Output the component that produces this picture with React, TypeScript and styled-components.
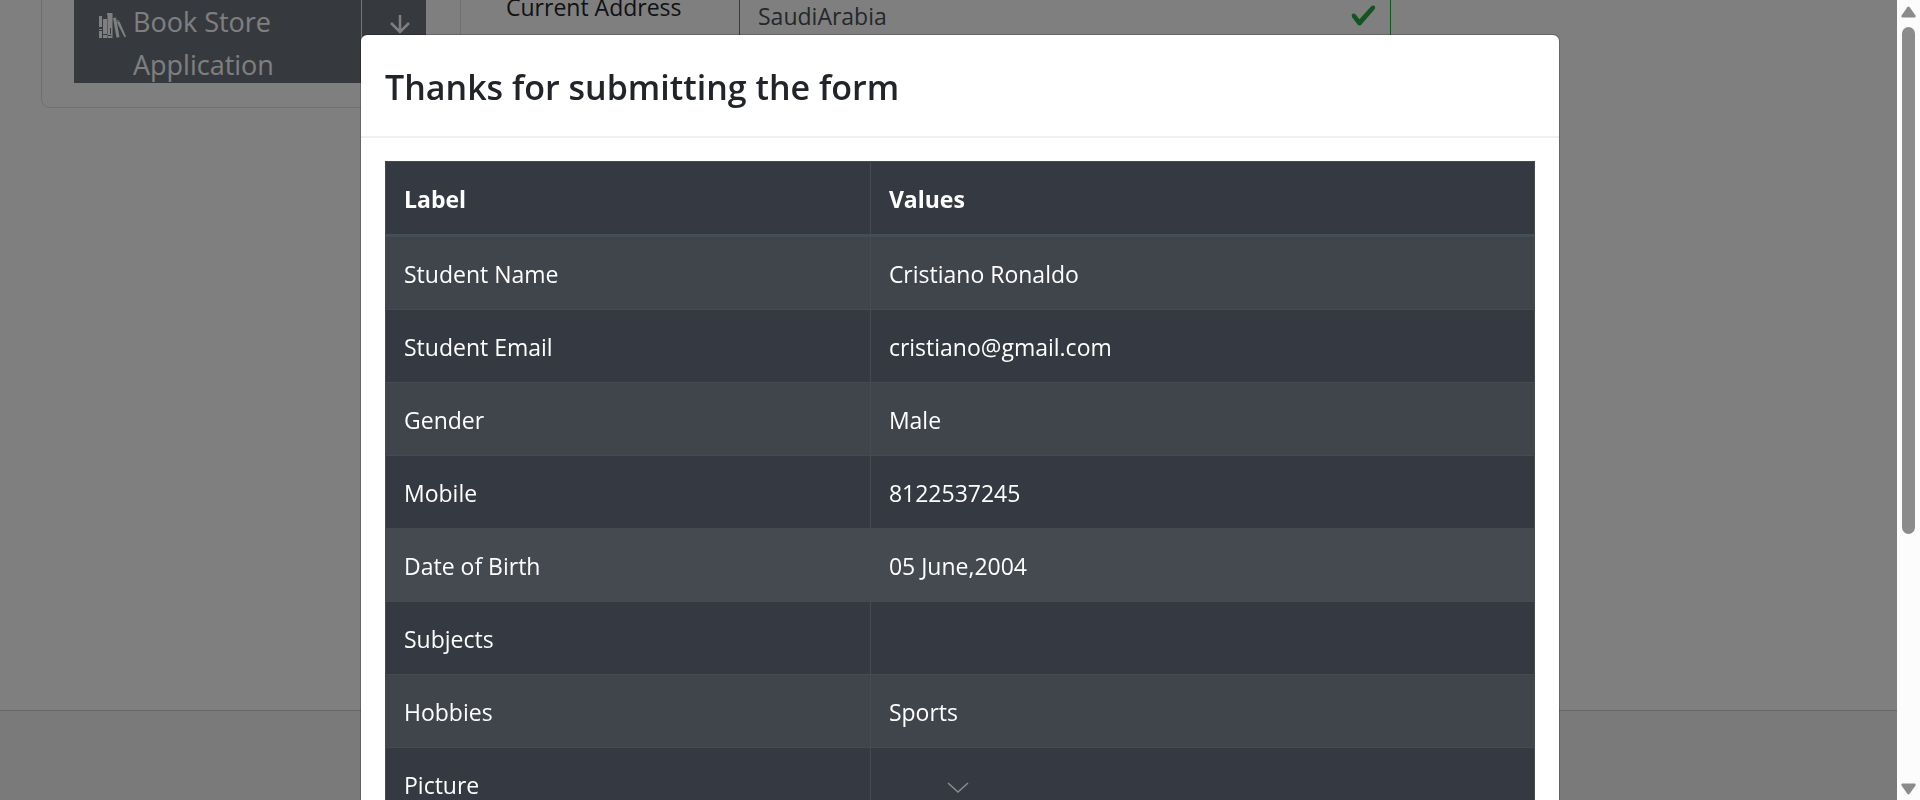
import React from "react";
import styled, { createGlobalStyle } from "styled-components";

const GlobalStyle = createGlobalStyle`
  *, *::before, *::after { box-sizing: border-box; }
  body {
    margin: 0;
    overflow: hidden;
    background: #ffffff;
    color: #212529;
    font-family: "Segoe UI", "Open Sans", "Noto Sans", sans-serif;
    font-size: 23px;
    line-height: 36px;
  }
`;

const Page = styled.div`
  height: 100vh;
  overflow: hidden;
  display: flex;
  flex-direction: column;
  padding-right: 23px;
`;

const Content = styled.main`
  flex: 1;
  min-height: 0;
  display: flex;
  align-items: flex-start;
  margin-top: -60px;
  padding: 0 41px;
`;

const Sidebar = styled.nav`
  flex: 0 0 420px;
  padding: 0 34px 24px 32px;
  border: 1px solid #dfdfdf;
  border-top: 0;
  border-radius: 0 0 9px 9px;
`;

const GroupHeader = styled.button`
  display: flex;
  align-items: stretch;
  width: 100%;
  height: 143px;
  padding: 0;
  border: 0;
  background: #6c757d;
  color: #ffffff;
  font: inherit;
  font-size: 27px;
  line-height: 43px;
  text-align: left;
`;

const GroupTitle = styled.span`
  flex: 1;
  display: flex;
  align-items: flex-start;
  gap: 7px;
  padding: 60px 60px 0 25px;

  svg { flex: none; margin-top: 13px; }
`;

const GroupToggle = styled.span`
  flex: 0 0 65px;
  display: flex;
  justify-content: center;
  padding: 75px 0 0 11px;
  border-left: 1px solid #e9ecef;
`;

const FormCard = styled.form`
  flex: 1;
  display: flex;
  align-items: flex-start;
  max-width: 1000px;
  padding: 49px 70px 0 45px;
`;

const FieldLabel = styled.label`
  flex: 0 0 233px;
  color: #212529;
`;

const FieldBox = styled.div`
  position: relative;
  flex: 1;
  display: flex;
`;

const AddressInput = styled.textarea`
  flex: 1;
  height: 180px;
  padding: 8px 54px 9px 18px;
  border: 1px solid #28a745;
  border-radius: 6px;
  background: #ffffff;
  color: #495057;
  font: inherit;
  resize: none;
`;

const ValidMark = styled.svg`
  position: absolute;
  top: 13px;
  right: 14px;
`;

const Footer = styled.footer`
  flex: 0 0 90px;
  border-top: 1px solid #d0d0d0;
  background: #f4f4f4;
`;

const Backdrop = styled.div`
  position: fixed;
  inset: 0;
  overflow: hidden;
  padding: 34px 24px 0;
  background: rgba(0, 0, 0, 0.5);
`;

const Dialog = styled.section`
  max-width: 1200px;
  margin: 0 auto;
  border: 1px solid rgba(0, 0, 0, 0.2);
  border-radius: 7px;
  background: #ffffff;
  background-clip: padding-box;
`;

const DialogHeader = styled.header`
  padding: 26px 24px 22px;
  border-bottom: 2px solid #efefef;
`;

const DialogTitle = styled.h1`
  margin: 0;
  font-size: 34px;
  font-weight: 600;
  line-height: 53px;
`;

const DialogBody = styled.div`
  padding: 23px 24px 24px;
`;

const DataTable = styled.table`
  width: 100%;
  table-layout: fixed;
  border-collapse: collapse;
  background: #353941;
  color: #ffffff;

  th, td {
    padding: 19px 18px 17px;
    border: 1px solid #464b53;
    text-align: left;
    font-weight: 400;
  }

  thead th {
    border-bottom: 3px solid #454d55;
    font-weight: 700;
  }
`;

const LabelColumn = styled.col`
  width: 42.2%;
`;

const DataRow = styled.tr<{ $striped: boolean; $active?: boolean }>`
  height: 73px;
  background: ${(p) => (p.$active ? "#454950" : p.$striped ? "#40444b" : "#353941")};
`;

const ScrollHint = styled.svg`
  position: fixed;
  bottom: 6px;
  left: calc(50% - 13px);
`;

const ScrollTrack = styled.div`
  position: fixed;
  top: 0;
  right: 0;
  bottom: 0;
  width: 23px;
  display: flex;
  flex-direction: column;
  align-items: center;
  padding: 6px 0 5px;
  background: #fcfcfc;
`;

const ScrollArea = styled.div`
  flex: 1;
  padding-top: 9px;
`;

const ScrollThumb = styled.div`
  width: 13px;
  height: 67%;
  border-radius: 7px;
  background: #8b8b8b;
`;

const rows = [
  { label: "Student Name", value: "Cristiano Ronaldo" },
  { label: "Student Email", value: "cristiano@gmail.com" },
  { label: "Gender", value: "Male" },
  { label: "Mobile", value: "8122537245" },
  { label: "Date of Birth", value: "05 June,2004", active: true },
  { label: "Subjects", value: "" },
  { label: "Hobbies", value: "Sports" },
  { label: "Picture", value: "" },
];

const BooksIcon = () => (
  <svg width="27" height="25" viewBox="0 0 27 25" fill="#ffffff" aria-hidden="true">
    <path d="M0 3h3v11H0zM0 16h3v1H0zM0 18h3v7H0z" />
    <path d="M4 6h4v15H4zM4 22h4v3H4z" />
    <path fillRule="evenodd" d="M8 0h5.500v25H8.500V2H8zM11 15v6h1v-6zM9 22v1h3.500v-1z" />
    <path d="M14 5l3-.5L20.500 24l-3 .8z" />
    <path d="M18 9.500l2.500-1L27 23.500l-1.500.8zM17.700 8l2-1 .4 1-2 .9z" />
  </svg>
);

const ArrowDownIcon = () => (
  <svg width="20" height="20" viewBox="0 0 20 20" fill="none" stroke="#ffffff" strokeWidth="2.5" aria-hidden="true">
    <path d="M10 0v17M1 8l9 9 9-9" />
  </svg>
);

const Scrollbar = () => (
  <ScrollTrack aria-hidden="true">
    <svg width="15" height="12" viewBox="0 0 15 12" fill="#8b8b8b">
      <path d="M6.300 1.200Q7.500-.3 8.700 1.200L14.500 9.500Q15 11.500 13.500 11.500H1.500Q0 11.500.5 9.500z" />
    </svg>
    <ScrollArea>
      <ScrollThumb />
    </ScrollArea>
    <svg width="15" height="12" viewBox="0 0 15 12" fill="#8b8b8b">
      <path d="M6.300 10.800Q7.500 12.300 8.700 10.800L14.500 2.500Q15 .5 13.500.5H1.500Q0 .5.5 2.500z" />
    </svg>
  </ScrollTrack>
);

export default function App() {
  return (
    <>
      <GlobalStyle />
      <Page>
        <Content>
          <Sidebar>
            <GroupHeader type="button">
              <GroupTitle>
                <BooksIcon />
                <span>Book Store Application</span>
              </GroupTitle>
              <GroupToggle>
                <ArrowDownIcon />
              </GroupToggle>
            </GroupHeader>
          </Sidebar>
          <FormCard>
            <FieldLabel htmlFor="currentAddress">Current Address</FieldLabel>
            <FieldBox>
              <AddressInput id="currentAddress" defaultValue="SaudiArabia" />
              <ValidMark width="27" height="27" viewBox="0 0 8 8" fill="#28a745" aria-hidden="true">
                <path d="M2.300 6.730L.6 4.530c-.4-1.040.46-1.400 1.100-.8l1.100 1.400 3.400-3.800c.6-.63 1.600-.27 1.200.7l-4 4.600c-.43.5-.8.4-1.100.1z" />
              </ValidMark>
            </FieldBox>
          </FormCard>
        </Content>
        <Footer />
      </Page>
      <Backdrop>
        <Dialog role="dialog" aria-modal="true" aria-labelledby="dialog-title">
          <DialogHeader>
            <DialogTitle id="dialog-title">Thanks for submitting the form</DialogTitle>
          </DialogHeader>
          <DialogBody>
            <DataTable>
              <colgroup>
                <LabelColumn />
                <col />
              </colgroup>
              <thead>
                <tr>
                  <th scope="col">Label</th>
                  <th scope="col">Values</th>
                </tr>
              </thead>
              <tbody>
                {rows.map((row, i) => (
                  <DataRow key={row.label} $striped={i % 2 === 0} $active={row.active}>
                    <td>{row.label}</td>
                    <td>{row.value}</td>
                  </DataRow>
                ))}
              </tbody>
            </DataTable>
          </DialogBody>
        </Dialog>
        <ScrollHint width="22" height="12" viewBox="0 0 22 12" fill="none" stroke="#8b8d90" strokeWidth="1.5" aria-hidden="true">
          <path d="M1 1l10 9 10-9" />
        </ScrollHint>
      </Backdrop>
      <Scrollbar />
    </>
  );
}
